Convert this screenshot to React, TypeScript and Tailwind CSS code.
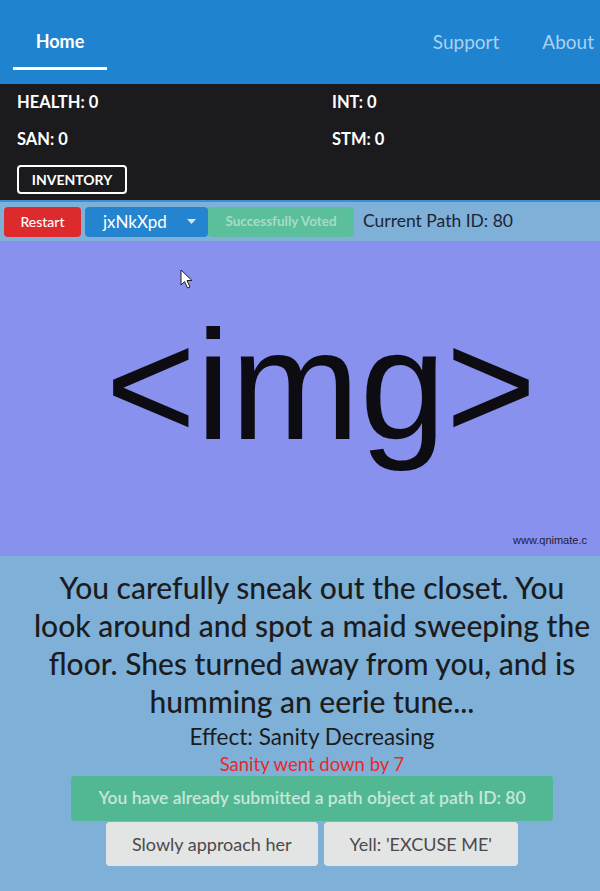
import React from 'react';

const stats = [
  { label: 'HEALTH', value: 0 },
  { label: 'INT', value: 0 },
  { label: 'SAN', value: 0 },
  { label: 'STM', value: 0 },
];

const choices = ['Slowly approach her', "Yell: 'EXCUSE ME'"];

const Cursor: React.FC = () => (
  <svg width="14" height="21" viewBox="0 0 14 21" className="absolute left-[180px] top-[28px]">
    <path d="M1 1 L1 16 L4.5 12.5 L7.5 19 L10 18 L7 11.5 L12 11.5 Z" fill="#fff" stroke="#222" strokeWidth="1" strokeLinejoin="round" />
  </svg>
);

export default function App() {
  return (
    <div className="min-h-[891px] bg-[#7eb0d8] font-['Lato','Noto_Sans',sans-serif] overflow-hidden">
      {/* nav */}
      <nav className="h-[84px] bg-[#1f83cf] flex items-start justify-between">
        <div className="ml-[13px] w-[94px] h-[70px] flex items-center justify-center border-b-[3px] border-white">
          <span className="text-[18px] font-bold text-white mt-[16px]">Home</span>
        </div>
        <div className="flex items-center h-[84px] gap-[43px] pr-[6px] pt-[1px]">
          <span className="text-[19px] text-[#a9d2f1]">Support</span>
          <span className="text-[19px] text-[#a9d2f1]">About</span>
        </div>
      </nav>

      {/* stats */}
      <div className="bg-[#1b1b1d] h-[118px] px-[17px] pt-[8px] border-b-[2px] border-[#3d8fd0]">
        <div className="grid grid-cols-[315px_1fr] gap-y-[17px]">
          {stats.map(s => (
            <div key={s.label} className="text-[16.5px] font-bold text-white leading-[20px]">{s.label}: {s.value}</div>
          ))}
        </div>
        <button className="mt-[16px] w-[110px] h-[29px] border-2 border-white rounded-[4px] text-[14px] font-bold text-white">INVENTORY</button>
      </div>

      {/* toolbar */}
      <div className="flex items-center h-[39px] pl-[4px]">
        <button className="w-[77px] h-[30px] rounded-[4px] bg-[#dd2b2d] text-white text-[14px] font-medium">Restart</button>
        <div className="ml-[4px] w-[123px] h-[30px] rounded-[4px] bg-[#2484d0] flex items-center text-white">
          <span className="text-[17px] ml-[18px]">jxNkXpd</span>
          <svg width="9" height="5" viewBox="0 0 9 5" className="ml-[20px]">
            <path d="M0 0 L9 0 L4.5 5 Z" fill="#d6e8f7" />
          </svg>
        </div>
        <div className="w-[146px] h-[30px] rounded-[4px] bg-[#5cbf9b] text-[#a7dcc6] text-[13.5px] font-bold flex items-center justify-center">Successfully Voted</div>
        <span className="ml-[9px] text-[17.5px] text-[#1d2634]">Current Path ID: 80</span>
      </div>

      {/* image */}
      <div className="relative h-[315px] bg-[#8991ee] overflow-hidden">
        <div className="w-[642px] h-[315px] flex items-center justify-center">
          <span className="font-['Liberation_Sans','Arial',sans-serif] text-[155px] leading-none text-[#0c0c12] mb-[26px]">&lt;img&gt;</span>
        </div>
        <span className="absolute left-[513px] top-[291px] font-['Liberation_Sans','Arial',sans-serif] text-[11px] text-[#1e2030] whitespace-nowrap">www.qnimate.c</span>
        <Cursor />
      </div>

      {/* story */}
      <div className="pl-[24px] pt-[12px] flex flex-col items-center text-center">
        <p className="w-[562px] text-[30px] leading-[38px] text-[#1c1c1e] font-medium">
          You carefully sneak out the closet. You look around and spot a maid sweeping the floor. Shes turned away from you, and is humming an eerie tune...
        </p>
        <p className="text-[22.5px] leading-[28px] text-[#1c1c1e] mt-[3px]">Effect: Sanity Decreasing</p>
        <p className="text-[18.5px] leading-[22px] text-[#e8282b] mt-[2px]">Sanity went down by 7</p>
        <div className="mt-[1px] w-[482px] h-[45px] rounded-[4px] bg-[#52b893] text-[#c6e7d9] text-[17.5px] font-semibold flex items-center justify-center">
          You have already submitted a path object at path ID: 80
        </div>
        <div className="flex gap-[6px] mt-[1px]">
          {choices.map(c => (
            <button key={c} className="h-[44px] px-[26px] rounded-[4px] bg-[#e3e4e4] text-[#4a4a4c] text-[18px] min-w-[192px]">{c}</button>
          ))}
        </div>
      </div>
    </div>
  );
}
